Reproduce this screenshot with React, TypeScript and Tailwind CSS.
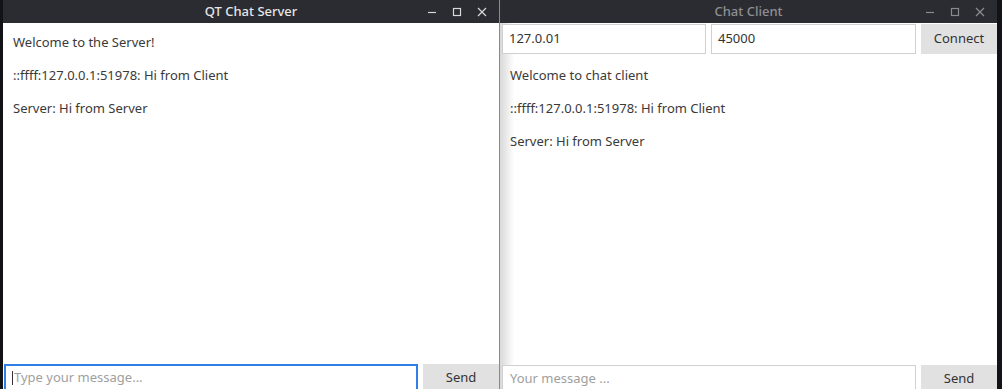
import React from "react";

function Controls({ dim }: { dim?: boolean }) {
  const c = dim ? "#8a8b90" : "#d8d8da";
  return (
    <div className="flex items-center gap-[11px] pr-[10px]">
      <svg width="14" height="14" viewBox="0 0 14 14">
        <path d="M3 7.5h8" stroke={c} strokeWidth="1.2" />
      </svg>
      <svg width="14" height="14" viewBox="0 0 14 14">
        <rect x="3.5" y="3.5" width="7" height="7" fill="none" stroke={c} strokeWidth="1.2" />
      </svg>
      <svg width="14" height="14" viewBox="0 0 14 14">
        <path d="M3 3l8 8M11 3l-8 8" stroke={c} strokeWidth="1.2" />
      </svg>
    </div>
  );
}

function TitleBar({ title, dim }: { title: string; dim?: boolean }) {
  return (
    <div className="relative h-[23px] bg-[#2b2c31] flex items-center justify-end shrink-0">
      <div
        className={`absolute inset-0 flex items-center justify-center text-[13px] font-medium ${
          dim ? "text-[#8e8f94]" : "text-[#e6e6e8]"
        }`}
      >
        {title}
      </div>
      <div className="relative">
        <Controls dim={dim} />
      </div>
    </div>
  );
}

export default function App() {
  return (
    <div
      className="w-[1002px] h-[389px] flex bg-[#101114] overflow-hidden text-[13px] text-[#3a3a3a]"
      style={{ fontFamily: '"Noto Sans", "Open Sans", sans-serif' }}
    >
      <div className="w-[3px] shrink-0 bg-[#121316]" />
      {/* Server window */}
      <div className="w-[497px] shrink-0 flex flex-col border-r border-[#8a8a8a]">
        <TitleBar title="QT Chat Server" />
        <div className="flex-1 bg-white flex flex-col">
          <div className="flex-1 pl-[10px] pt-[10px] flex flex-col gap-[15px] leading-[18px]">
            <div>Welcome to the Server!</div>
            <div>::ffff:127.0.0.1:51978: Hi from Client</div>
            <div>Server: Hi from Server</div>
          </div>
          <div className="flex items-start gap-[5px] pl-[1px] h-[25px]">
            <div className="w-[415px] h-[28px] border-2 border-[#2f7fe6] flex items-center pl-[6px] text-[#a0a0a0]">
              <span className="w-[1px] h-[14px] bg-[#333] mr-[1px]" />
              Type your message...
            </div>
            <div className="w-[76px] h-[28px] bg-[#e1e1e1] flex items-center justify-center text-[#333]">
              Send
            </div>
          </div>
        </div>
      </div>
      {/* Client window */}
      <div className="w-[497px] shrink-0 flex flex-col">
        <TitleBar title="Chat Client" dim />
        <div className="flex-1 bg-white flex flex-col relative">
          <div className="absolute left-0 top-0 bottom-0 w-[14px] bg-gradient-to-r from-[#d8d8d8] to-white pointer-events-none" />
          <div className="relative flex gap-[5px] pl-[2px] pt-[1px]">
            <div className="w-[204px] h-[30px] border border-[#d0d0d0] bg-white flex items-center pl-[6px] text-[#333]">
              127.0.01
            </div>
            <div className="w-[205px] h-[30px] border border-[#d0d0d0] bg-white flex items-center pl-[6px] text-[#333]">
              45000
            </div>
            <div className="w-[76px] h-[30px] bg-[#e1e1e1] flex items-center justify-center text-[#333]">
              Connect
            </div>
          </div>
          <div className="relative flex-1 pl-[10px] pt-[12px] flex flex-col gap-[15px] leading-[18px]">
            <div>Welcome to chat client</div>
            <div>::ffff:127.0.0.1:51978: Hi from Client</div>
            <div>Server: Hi from Server</div>
          </div>
          <div className="relative flex items-start gap-[5px] pl-[2px] h-[24px]">
            <div className="w-[414px] h-[28px] border border-[#d0d0d0] bg-white flex items-center pl-[7px] text-[#a0a0a0]">
              Your message ...
            </div>
            <div className="w-[76px] h-[28px] bg-[#e1e1e1] flex items-center justify-center text-[#333]">
              Send
            </div>
          </div>
        </div>
      </div>
      <div className="flex-1 bg-[#121316]" />
    </div>
  );
}
